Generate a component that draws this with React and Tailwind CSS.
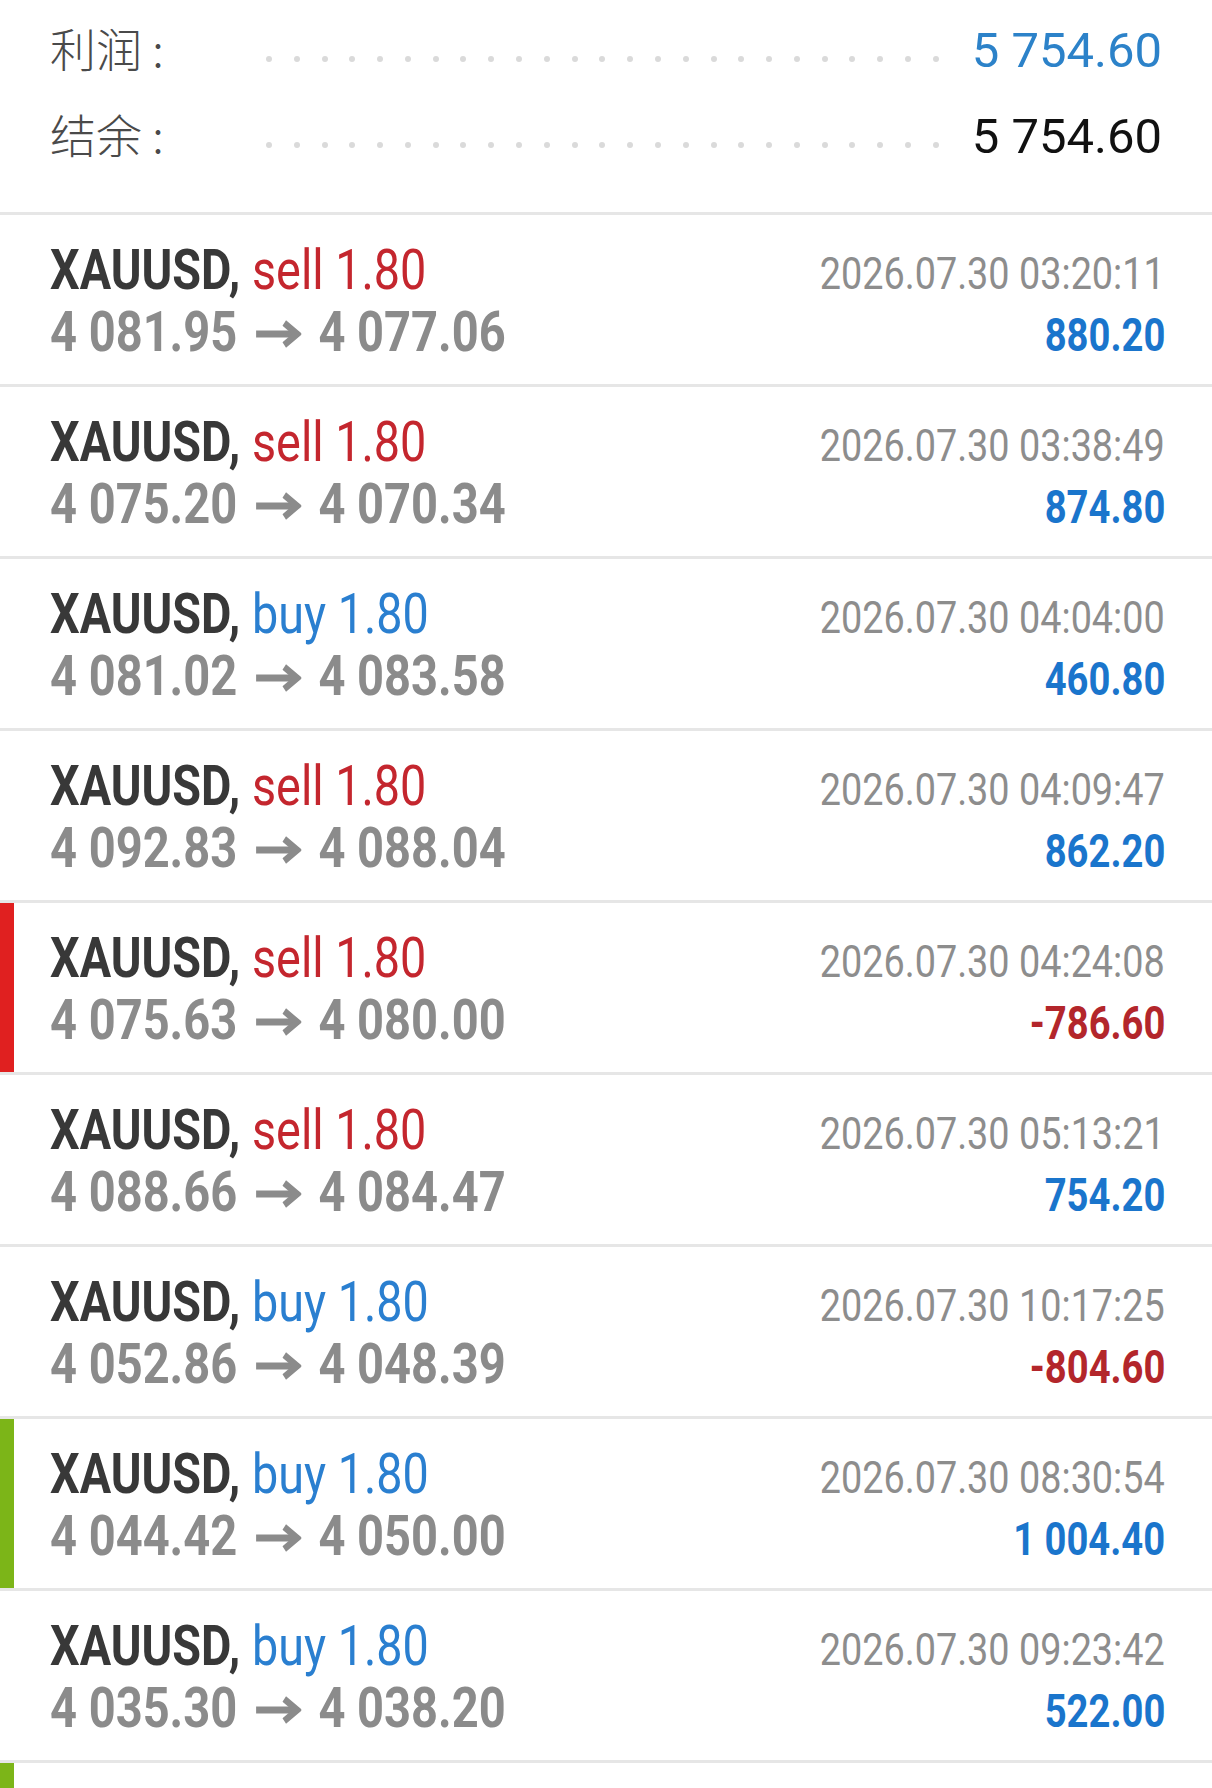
import React from "react";

const trades = [
  { side: "sell", open: "4 081.95", close: "4 077.06", time: "2026.07.30 03:20:11", profit: "880.20" },
  { side: "sell", open: "4 075.20", close: "4 070.34", time: "2026.07.30 03:38:49", profit: "874.80" },
  { side: "buy", open: "4 081.02", close: "4 083.58", time: "2026.07.30 04:04:00", profit: "460.80" },
  { side: "sell", open: "4 092.83", close: "4 088.04", time: "2026.07.30 04:09:47", profit: "862.20" },
  { side: "sell", open: "4 075.63", close: "4 080.00", time: "2026.07.30 04:24:08", profit: "-786.60", mark: "red" },
  { side: "sell", open: "4 088.66", close: "4 084.47", time: "2026.07.30 05:13:21", profit: "754.20" },
  { side: "buy", open: "4 052.86", close: "4 048.39", time: "2026.07.30 10:17:25", profit: "-804.60" },
  { side: "buy", open: "4 044.42", close: "4 050.00", time: "2026.07.30 08:30:54", profit: "1 004.40", mark: "green" },
  { side: "buy", open: "4 035.30", close: "4 038.20", time: "2026.07.30 09:23:42", profit: "522.00" },
];

const SummaryLine = ({ label, value, blue }) => (
  <div className="flex items-baseline h-[86px] leading-[86px]">
    <span className="w-[216px] shrink-0 text-[46px] text-[#4a4a4a] font-['Noto_Sans_CJK_SC',sans-serif] font-light">
      {label}
    </span>
    <div className="flex-1 flex justify-between items-baseline">
      {Array.from({ length: 25 }).map((_, i) => (
        <span key={i} className="inline-block w-[6px] h-[6px] -translate-y-[5px] rounded-full bg-[#dadada]" />
      ))}
    </div>
    <span
      className={
        "w-[223px] shrink-0 text-right text-[49px] font-['Roboto',sans-serif] " +
        (blue ? "text-[#2c82c9]" : "text-[#111111]")
      }
    >
      {value}
    </span>
  </div>
);

const Arrow = () => (
  <svg
    width="53"
    height="28"
    viewBox="0 0 53 28"
    className="inline-block align-[3px] ml-[22px] mr-[20px]"
  >
    <path d="M0 14H47" stroke="#8b8b8b" strokeWidth="7" fill="none" />
    <path d="M33 3L48 14L33 25" stroke="#8b8b8b" strokeWidth="7" fill="none" />
  </svg>
);

const TradeRow = ({ t }) => {
  let bar = "pl-[50px]";
  if (t.mark === "red") bar = "border-l-[14px] border-l-[#e02020] pl-[36px]";
  if (t.mark === "green") bar = "border-l-[14px] border-l-[#7cb518] pl-[36px]";
  const neg = t.profit.startsWith("-");
  return (
    <div className="border-t-[3px] border-[#e6e6e6]">
      <div className={"h-[169px] pt-[25px] pr-[47px] font-['Roboto',sans-serif] " + bar}>
        <div className="flex justify-between items-baseline leading-[60px]">
          <span className="inline-block origin-left scale-x-[0.85] whitespace-nowrap text-[55px]">
            <span className="font-bold text-[#383838]">XAUUSD,</span>{" "}
            <span className={t.side === "sell" ? "text-[#c4262e]" : "text-[#2a7fd0]"}>
              {t.side} 1.80
            </span>
          </span>
          <span className="inline-block origin-right scale-x-[0.84] whitespace-nowrap text-[45px] text-[#8d8d8d]">
            {t.time}
          </span>
        </div>
        <div className="flex justify-between items-baseline leading-[60px] -mt-[2px]">
          <span className="inline-block origin-left scale-x-[0.855] whitespace-nowrap text-[55px] font-bold text-[#8b8b8b]">
            {t.open}
            <Arrow />
            {t.close}
          </span>
          <span
            className={
              "inline-block origin-right scale-x-[0.83] whitespace-nowrap text-[46px] font-bold " +
              (neg ? "text-[#b3262b]" : "text-[#1a75cc]")
            }
          >
            {t.profit}
          </span>
        </div>
      </div>
    </div>
  );
};

export default function App() {
  return (
    <div className="w-[1212px] h-[1788px] overflow-hidden bg-white">
      <div className="h-[212px] px-[50px] pt-[4px]">
        <SummaryLine label="利润 :" value="5 754.60" blue />
        <SummaryLine label="结余 :" value="5 754.60" />
      </div>
      {trades.map((t, i) => (
        <TradeRow key={i} t={t} />
      ))}
      <div className="border-t-[3px] border-[#e6e6e6]">
        <div className="h-[169px] border-l-[14px] border-l-[#7cb518]" />
      </div>
    </div>
  );
}
